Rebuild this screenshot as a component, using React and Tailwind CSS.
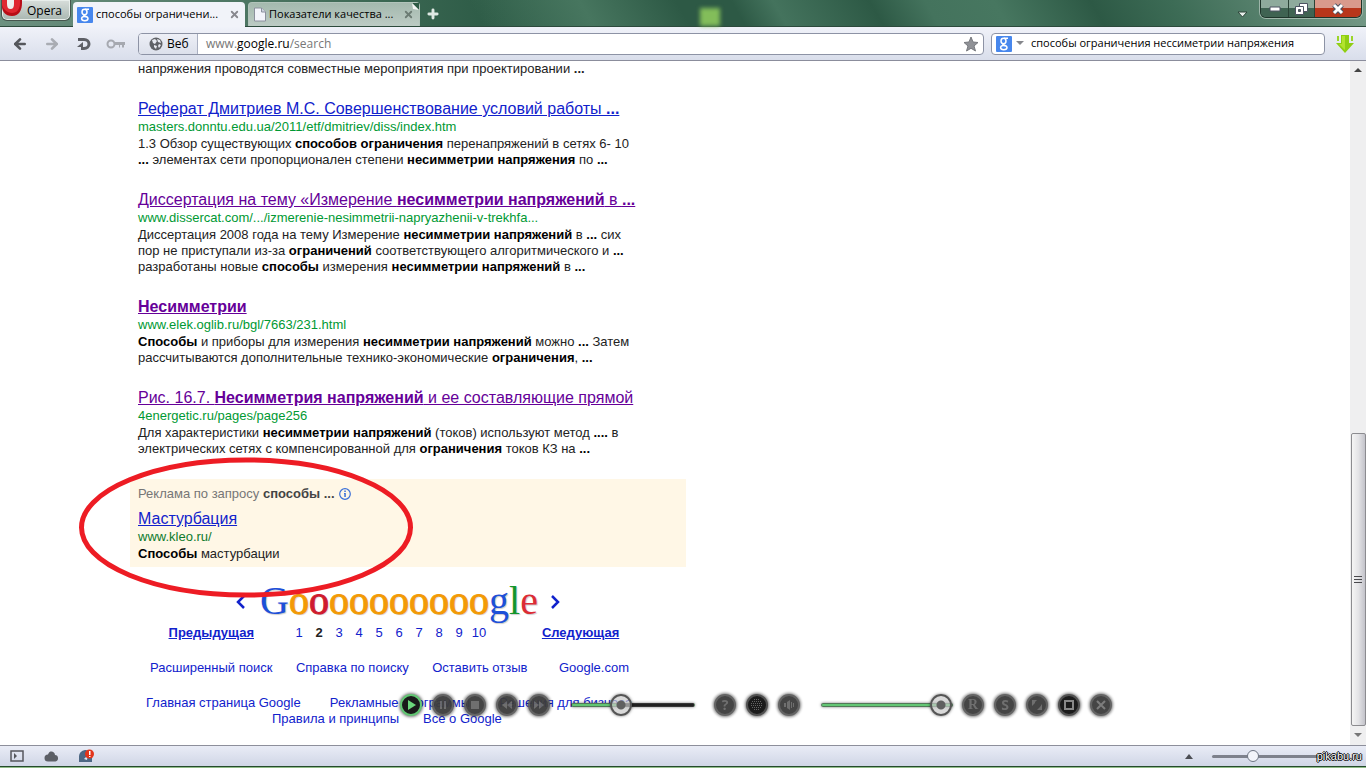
import { useState } from "react";
import { ArrowLeft, ArrowRight, Plus, X } from "lucide-react";

const results = [
  {
    title: <>Реферат Дмитриев М.С. Совершенствование условий работы <b>...</b></>,
    url: "masters.donntu.edu.ua/2011/etf/dmitriev/diss/index.htm",
    visited: false,
    lines: [
      <>1.3 Обзор существующих <b>способов ограничения</b> перенапряжений в сетях 6- 10</>,
      <><b>...</b> элементах сети пропорционален степени <b>несимметрии напряжения</b> по <b>...</b></>,
    ],
  },
  {
    title: <>Диссертация на тему «Измерение <b>несимметрии напряжений</b> в <b>...</b></>,
    url: "www.dissercat.com/.../izmerenie-nesimmetrii-napryazhenii-v-trekhfa...",
    visited: true,
    lines: [
      <>Диссертация 2008 года на тему Измерение <b>несимметрии напряжений</b> в <b>...</b> сих</>,
      <>пор не приступали из-за <b>ограничений</b> соответствующего алгоритмического и <b>...</b></>,
      <>разработаны новые <b>способы</b> измерения <b>несимметрии напряжений</b> в <b>...</b></>,
    ],
  },
  {
    title: <b>Несимметрии</b>,
    url: "www.elek.oglib.ru/bgl/7663/231.html",
    visited: true,
    lines: [
      <><b>Способы</b> и приборы для измерения <b>несимметрии напряжений</b> можно <b>...</b> Затем</>,
      <>рассчитываются дополнительные технико-экономические <b>ограничения</b>, <b>...</b></>,
    ],
  },
  {
    title: <>Рис. 16.7. <b>Несимметрия напряжений</b> и ее составляющие прямой</>,
    url: "4energetic.ru/pages/page256",
    visited: true,
    lines: [
      <>Для характеристики <b>несимметрии напряжений</b> (токов) используют метод <b>....</b> в</>,
      <>электрических сетях с компенсированной для <b>ограничения</b> токов КЗ на <b>...</b></>,
    ],
  },
];

const pages = [1, 2, 3, 4, 5, 6, 7, 8, 9, 10];

export default function App() {
  return (
    <div className="relative flex h-screen flex-col overflow-hidden bg-white font-['Open_Sans','Noto_Sans',sans-serif] text-xs text-black">
      <TabBar />
      <Toolbar />
      <div className="flex min-h-0 flex-1">
        <main className="min-w-0 flex-1 overflow-hidden pl-[138px] font-['Liberation_Sans',Arial,sans-serif] text-[13px] leading-4 whitespace-nowrap text-[#222]">
          <p className="mb-[23px]">
            напряжения проводятся совместные мероприятия при проектировании <b>...</b>
          </p>
          {results.map((r) => (
            <Result key={r.url} {...r} />
          ))}
          <Ad />
          <Pagination />
          <FooterLinks />
        </main>
        <ScrollBar />
      </div>
      <StatusBar />

      {/* Red marker around the ad */}
      <svg className="pointer-events-none absolute top-[455px] left-[76px]" width="340" height="146" viewBox="0 0 340 146">
        <ellipse cx="170" cy="72.5" rx="164.500" ry="67.500" fill="none" stroke="#ed1c24" strokeWidth="5" />
      </svg>
      <Player />
    </div>
  );
}

function GoogleIcon() {
  return (
    <svg width="16" height="16" viewBox="0 0 16 16" className="shrink-0">
      <rect width="16" height="16" rx="1" fill="#4787ed" />
      <g fill="none" stroke="#fff" strokeWidth="1.500">
        <ellipse cx="7.500" cy="5" rx="2.500" ry="2.700" />
        <path d="M8 2.200h4M7 7.700c-1 1 2 1.500 3 2.300" />
        <ellipse cx="7.800" cy="11.600" rx="3.200" ry="2.200" />
      </g>
    </svg>
  );
}

function TabBar() {
  return (
    <header className="relative flex h-[27px] shrink-0 items-start border-b border-[#2c4a3c] bg-linear-to-r from-[#6c9180] via-[#2f5d48] via-35% to-[#477a62]">
      <div className="pointer-events-none absolute inset-0 bg-[linear-gradient(60deg,transparent_0_35%,#47765f_43%,#2d5945_50%,#2d5945_54%,#44735d_57%,#2d5945_64%,#44735d_68%,#477760_73%,#2d5945_80%,#3d6c56_86%,#769a88_100%)]" />
      <div className="pointer-events-none absolute top-2 left-[700px] h-[18px] w-5 bg-[#83bd5a] blur-[2px]" />
      <button className="relative ml-px flex h-[21px] w-[70px] items-start overflow-hidden rounded-b-md border border-t-0 border-[#46564e] bg-linear-to-b from-[#d8dedb] to-[#a9b7b1] shadow-[inset_0_0_0_1px_#e8eeeb]">
        <svg width="22" height="16" viewBox="0 0 22 16" className="shrink-0">
          <path d="M0 0h20v3c0 7-3 13-10 13S0 11 0 7z" fill="#b80d16" />
          <path d="M0 0h18v3c0 6-3 10-8 10S1 9 0 5z" fill="#df2730" />
          <path d="M5 0h7v4c0 3-1 5-3.500 5S5 7 5 4z" fill="#edf0ee" />
        </svg>
        <span className="pl-[3px] leading-[22px]">Opera</span>
      </button>
      <div className="relative mt-[2px] ml-[2px] flex h-[25px] w-[172px] items-center rounded-t-sm bg-[#f1f3f9] pr-[5px] pl-1">
        <GoogleIcon />
        <span className="flex-1 pl-[3px] text-[11px] whitespace-nowrap">способы ограничени...</span>
        <button aria-label="Закрыть вкладку">
          <X className="size-[11px] text-[#88898f]" strokeWidth={4} />
        </button>
      </div>
      <div className="relative mt-[2px] ml-[3px] flex h-[24px] w-[172px] items-center rounded-t-sm border border-b-0 border-[#b2c4bb] bg-linear-to-b from-[#a4b9ae] to-[#bccbc4] pr-[5px] pl-1">
        <svg width="14" height="15" viewBox="0 0 14 15" className="shrink-0">
          <path d="M1.500 1h7l4 4v9h-11z" fill="#f3f4fb" stroke="#8b909d" />
          <path d="M8.500 1v4h4" fill="#cfd3e0" stroke="#8b909d" />
        </svg>
        <span className="flex-1 pl-[2px] text-[11px] whitespace-nowrap">Показатели качества ...</span>
        <button aria-label="Закрыть вкладку">
          <X className="size-[11px] text-[#6c7c74]" strokeWidth={4} />
        </button>
        <svg width="7" height="7" viewBox="0 0 7 7" className="absolute top-0 right-0">
          <path d="M0 0h7v7z" fill="#2d5a45" />
          <path d="M0 0l7 7-6-1z" fill="#f3f5f4" />
        </svg>
      </div>
      <button aria-label="Новая вкладка" className="relative mt-[7px] ml-[6px]">
        <Plus className="size-[14px] text-[#dfe9e4]" strokeWidth={5} />
      </button>
      <svg width="11" height="7" viewBox="0 0 11 7" className="relative mt-[11px] mr-3 ml-auto shrink-0">
        <path d="M1 1h9L5.500 6z" fill="#e8efeb" stroke="#2d4439" />
      </svg>
      <div className="relative mr-1 flex h-[18px] overflow-hidden rounded-b-md border border-t-0 border-[#1f352b] shadow-[0_0_0_1px_#9db5a9]">
        <button aria-label="Свернуть" className="flex w-7 items-center justify-center border-r border-[#2a4236] bg-linear-to-b from-[#8eaa9c] from-50% to-[#3f6352] to-50%">
          <svg width="12" height="6" viewBox="0 0 12 6"><path d="M1 1h10v4H1z" fill="#fff" stroke="#4c5362" /></svg>
        </button>
        <button aria-label="Развернуть" className="flex w-[26px] items-center justify-center border-r border-[#2a4236] bg-linear-to-b from-[#8eaa9c] from-50% to-[#3f6352] to-50%">
          <svg width="13" height="12" viewBox="0 0 13 12" fill="#fff" stroke="#4c5362">
            <path d="M4.500.5h8v8h-8z" />
            <path d="M.5 3.500h8v8h-8z" />
            <path d="M3.500 6.500h2v2h-2z" fill="#56705f" />
          </svg>
        </button>
        <button aria-label="Закрыть" className="flex w-[46px] items-center justify-center bg-linear-to-b from-[#d99a8c] from-50% to-[#b8361b] to-50%">
          <svg width="14" height="12" viewBox="0 0 14 12">
            <path d="M3 2l8 8M11 2l-8 8" stroke="#4c5362" strokeWidth="5" />
            <path d="M3 2l8 8M11 2l-8 8" stroke="#fff" strokeWidth="3" />
          </svg>
        </button>
      </div>
    </header>
  );
}

function Toolbar() {
  return (
    <div className="flex h-[34px] shrink-0 items-center border-b border-[#8b8d9c] bg-linear-to-b from-[#f0f2f9] to-[#d9deeb] pr-3 pl-3">
      <div className="flex w-[126px] items-center">
        <button aria-label="Назад" className="w-8"><ArrowLeft className="size-4 text-[#55575c]" strokeWidth={4} /></button>
        <button aria-label="Вперёд" className="w-8"><ArrowRight className="size-4 text-[#a9acb3]" strokeWidth={4} /></button>
        <button aria-label="Обновить" className="w-[30px]">
          <svg width="15" height="14" viewBox="0 0 15 14" fill="none" stroke="#5e6066" strokeWidth="3">
            <path d="M2 2.500h6c3 0 5 2 5 4.500s-2 4.500-5 4.500H5" />
            <path d="M7 5v5H1z" fill="#5e6066" stroke="none" />
          </svg>
        </button>
        <button aria-label="Пароли">
          <svg width="20" height="10" viewBox="0 0 20 10" fill="none" stroke="#a6a9b0" strokeWidth="2">
            <circle cx="5" cy="5" r="3.500" />
            <path d="M9 4.500h10M13 7h1M16 7h2" strokeWidth="3" />
          </svg>
        </button>
      </div>
      <div className="flex h-[22px] min-w-0 flex-1 items-center overflow-hidden rounded-sm border border-[#8d93a5] bg-white pr-1">
        <button className="flex h-full w-[59px] items-center gap-1 border-r border-[#aab0c1] bg-linear-to-b from-[#edeff6] to-[#dce0eb] pl-[10px]">
          <svg width="14" height="14" viewBox="0 0 14 14">
            <circle cx="7" cy="7" r="6.500" fill="#606267" />
            <path d="M3 3l3-1 2 2-2 3-2-1zM8 2l3 1 1 3-3-1zM5 8l3 1-1 3-2-2zM10 7l2 1-2 3-1-2z" fill="#e8eaf1" />
          </svg>
          Веб
        </button>
        <div className="flex-1 pl-2 text-[#777]">
          www.<span className="text-black">google.ru</span>/search
        </div>
        <button aria-label="В закладки">
          <svg width="16" height="16" viewBox="0 0 16 16">
            <path d="M8 1l2 5 5 .5-4 3.500 1.500 5L8 12.300 3.500 15 5 10 1 6.500 6 6z" fill="#8f9196" stroke="#77797e" />
          </svg>
        </button>
      </div>
      <div className="ml-[7px] flex h-[22px] w-[334px] items-center rounded-sm border border-[#8d93a5] bg-white pl-1">
        <GoogleIcon />
        <svg width="8" height="5" viewBox="0 0 8 5" className="ml-1 shrink-0"><path d="M0 0h8L4 4z" fill="#85878c" /></svg>
        <input
          aria-label="Поиск"
          className="min-w-0 flex-1 bg-transparent pl-[7px] text-[11px] outline-none"
          defaultValue="способы ограничения нессиметрии напряжения"
        />
      </div>
      <button aria-label="Загрузки" className="ml-[11px]">
        <svg width="18" height="18" viewBox="0 0 18 18">
          <path d="M5 0h8v8h5l-9 10L0 8h5z" fill="#8fce12" />
          <path d="M1 1h2v5H1zM15 1h2v5h-2z" fill="#9bd52a" />
          <path d="M6 1h3v14L3 9h3z" fill="#b2e32d" />
        </svg>
      </button>
    </div>
  );
}

function Result({ title, url, visited, lines }) {
  return (
    <article className="mb-[23px]">
      <h3 className="text-base leading-[18px]">
        <a href="#" className={`underline ${visited ? "text-[#609]" : "text-[#1122cc]"}`}>{title}</a>
      </h3>
      <cite className="block leading-[18px] text-[#093] not-italic">{url}</cite>
      {lines.map((line, i) => (
        <div key={i} className="[&_b]:text-black">{line}</div>
      ))}
    </article>
  );
}

function Ad() {
  return (
    <section className="-mt-px -ml-2 w-[556px] bg-[#fff7e6] px-2 pt-[7px] pb-[5px]">
      <div className="mb-2 flex items-center gap-1 text-[#767676]">
        <span>Реклама по запросу <b className="text-[#444]">способы ...</b></span>
        <svg width="12" height="12" viewBox="0 0 12 12">
          <circle cx="6" cy="6" r="5.300" fill="none" stroke="#3a6fd8" strokeWidth="1.200" />
          <path d="M5.300 2.500h1.500v1.500H5.300zM5 5h1.800v4H5.300V6H5z" fill="#3a6fd8" />
        </svg>
      </div>
      <h3 className="text-base leading-[18px]">
        <a href="#" className="text-[#1122cc] underline">Мастурбация</a>
      </h3>
      <cite className="block leading-[18px] text-[#0e7a2c] not-italic">www.kleo.ru/</cite>
      <div><b className="text-black">Способы</b> мастурбации</div>
    </section>
  );
}

function Letter({ className, children }) {
  return (
    <span
      className={`h-10 font-['Liberation_Serif',serif] text-[40px] leading-8 [text-shadow:1px_1px_1px_#0003] ${className}`}
    >
      {children}
    </span>
  );
}

function Pagination() {
  return (
    <nav className="mt-[18px] flex text-[#1122cc]">
      <a href="#" className="flex w-[116px] flex-col items-end font-bold underline">
        <span className="flex h-10 items-center pr-2 pb-[6px]">
          <svg width="10" height="14" viewBox="0 0 10 14" fill="none" stroke="#1122cc" strokeWidth="2.500"><path d="M8 1L2 7l6 6" /></svg>
        </span>
        Предыдущая
      </a>
      <Letter className="ml-[6px] w-[29px] text-[#1d50d8]">G</Letter>
      {pages.map((n) => (
        <a key={n} href="#" className={`flex w-5 flex-col items-center ${n === 2 ? "font-bold text-[#222]" : ""}`}>
          <Letter
            className={`[-webkit-text-stroke:1px_currentColor] ${n === 2 ? "font-normal text-[#cf1b2e]" : "text-[#f39a05]"}`}
          >
            o
          </Letter>
          {n}
        </a>
      ))}
      <Letter className="text-[#1d50d8]">g</Letter>
      <Letter className="text-[#12962b]">l</Letter>
      <Letter className="text-[#dc2c35]">e</Letter>
      <a href="#" className="ml-1 flex flex-col font-bold underline">
        <span className="flex h-10 items-center pb-[6px] pl-2">
          <svg width="10" height="14" viewBox="0 0 10 14" fill="none" stroke="#1122cc" strokeWidth="2.500"><path d="M2 1l6 6-6 6" /></svg>
        </span>
        Следующая
      </a>
    </nav>
  );
}

function FooterLinks() {
  return (
    <footer className="w-[494px] text-[#1122cc]">
      <div className="mt-[19px] flex justify-between pr-[3px] pl-3">
        <a href="#">Расширенный поиск</a>
        <a href="#">Справка по поиску</a>
        <a href="#">Оставить отзыв</a>
        <a href="#" className="pl-2">Google.com</a>
      </div>
      <div className="mt-[19px] flex justify-between pl-2">
        <a href="#">Главная страница Google</a>
        <a href="#">Рекламные программы</a>
        <a href="#">Решения для бизнеса</a>
      </div>
      <div className="flex gap-6 pl-[134px]">
        <a href="#">Правила и принципы</a>
        <a href="#">Все о Google</a>
      </div>
    </footer>
  );
}

function ScrollBar() {
  return (
    <div className="flex w-4 shrink-0 flex-col items-center bg-[#efeff0]">
      <svg width="8" height="5" viewBox="0 0 8 5" className="mt-[7px]"><path d="M4 0l4 4H0z" fill="#444" /></svg>
      <div className="flex-[361]" />
      <div className="flex w-[15px] flex-[292] items-center justify-center rounded-xs border border-[#8c8c90] bg-linear-to-r from-[#f5f5f5] via-[#e3e3e6] to-[#c3c3ca]">
        <svg width="8" height="9" viewBox="0 0 8 9"><path d="M0 1.500h8M0 4.500h8M0 7.500h8" stroke="#4a4a4e" /></svg>
      </div>
      <svg width="8" height="5" viewBox="0 0 8 5" className="my-[7px]"><path d="M0 0h8L4 4z" fill="#777" /></svg>
    </div>
  );
}

function StatusBar() {
  return (
    <div className="flex h-[23px] shrink-0 flex-col">
      <div className="flex h-[21px] items-center border-t border-[#8d8f9b] bg-linear-to-b from-[#e9ecf6] to-[#d0d6e6] pl-[10px]">
        <button aria-label="Панели">
          <svg width="14" height="12" viewBox="0 0 14 12"><path d="M1 1h12v10H1z" fill="none" stroke="#55575d" strokeWidth="1.500" /><path d="M4 3v6l3-3z" fill="#55575d" /></svg>
        </button>
        <button aria-label="Opera Link" className="ml-5">
          <svg width="15" height="11" viewBox="0 0 15 11"><path d="M4 10.500a3.500 3.500 0 010-7C5 1 6 .5 7.500.5S11 2 11 4a3.300 3.300 0 01.5 6.500z" fill="#5c5f66" /></svg>
        </button>
        <button aria-label="Opera Turbo" className="ml-5">
          <svg width="16" height="14" viewBox="0 0 16 14">
            <path d="M0 13V8a6 6 0 0113-1v6z" fill="#4d6784" />
            <path d="M5 10l4-4-1 5z" fill="#dfe5ef" />
            <circle cx="10.500" cy="5" r="4.500" fill="#e3341a" />
            <path d="M10 2h1.500v4H10zM10 7h1.500v1H10z" fill="#fff" />
          </svg>
        </button>
        <svg width="8" height="5" viewBox="0 0 8 5" className="mr-[19px] ml-auto"><path d="M4 0l4 5H0z" fill="#4c4e54" /></svg>
        <input
          type="range"
          aria-label="Масштаб"
          defaultValue="35"
          className="h-[3px] w-[113px] appearance-none rounded-full bg-[#7d818c] [&::-webkit-slider-thumb]:size-3 [&::-webkit-slider-thumb]:appearance-none [&::-webkit-slider-thumb]:rounded-full [&::-webkit-slider-thumb]:border [&::-webkit-slider-thumb]:border-[#6d7482] [&::-webkit-slider-thumb]:bg-[#f2f4fa]"
        />
        <span className="z-10 -ml-2 pr-1 font-['Liberation_Sans',sans-serif] text-[11px] leading-4 text-white [text-shadow:1px_0_#000,-1px_0_#000,0_1px_#000,0_-1px_#000]">
          pikabu.ru
        </span>
      </div>
      <div className="h-[2px] border-t border-[#254a2c] bg-[#91bd89]" />
    </div>
  );
}

function RoundButton({ label, tone = "dim", children }) {
  const tones = {
    dim: "border-[#5c5c5c] bg-[#3c3c3c] text-[#686868] opacity-95",
    dark: "border-[#505050] bg-[#1b1b1b] text-[#646464]",
    play: "border-[#62c673] bg-[#1a1a1a] text-[#6bd77b]",
  };
  return (
    <button
      aria-label={label}
      className={`mx-[5px] flex size-[22px] shrink-0 items-center justify-center rounded-full border-2 shadow-[0_0_3px_1px_#0008] ${tones[tone]}`}
    >
      {children}
    </button>
  );
}

function PlayerSlider({ label, value, onChange, className }) {
  return (
    <input
      type="range"
      aria-label={label}
      value={value}
      onChange={(e) => onChange(Number(e.target.value))}
      className={`h-[4px] appearance-none rounded-full border border-[#4449] shadow-[0_0_3px_#0008] [&::-webkit-slider-thumb]:size-[22px] [&::-webkit-slider-thumb]:appearance-none [&::-webkit-slider-thumb]:rounded-full [&::-webkit-slider-thumb]:border-2 [&::-webkit-slider-thumb]:border-[#555] [&::-webkit-slider-thumb]:bg-[radial-gradient(circle,#606060_0_4px,#c8c8c8b0_5px)] [&::-webkit-slider-thumb]:shadow-[0_0_3px_#0008] ${className}`}
      style={{ backgroundImage: `linear-gradient(to right, #62c673 ${value}%, #202020 ${value}%)` }}
    />
  );
}

function Player() {
  const [position, setPosition] = useState(38);
  const [volume, setVolume] = useState(100);

  return (
    <div className="absolute top-[693px] left-[395px] flex h-6 items-center">
      <RoundButton label="Play" tone="play">
        <svg width="12" height="12" viewBox="0 0 12 12" fill="currentColor"><path d="M3 1l8 5-8 5z" /></svg>
      </RoundButton>
      <RoundButton label="Pause">
        <svg width="10" height="10" viewBox="0 0 10 10" fill="currentColor"><path d="M2 1h2v8H2zM6 1h2v8H6z" /></svg>
      </RoundButton>
      <RoundButton label="Stop">
        <svg width="8" height="8" viewBox="0 0 8 8" fill="currentColor"><path d="M0 0h8v8H0z" /></svg>
      </RoundButton>
      <RoundButton label="Rewind">
        <svg width="12" height="10" viewBox="0 0 12 10" fill="currentColor"><path d="M6 1v8L1 5zM11 1v8L6 5z" /></svg>
      </RoundButton>
      <RoundButton label="Forward">
        <svg width="12" height="10" viewBox="0 0 12 10" fill="currentColor"><path d="M1 1v8l5-4zM6 1v8l5-4z" /></svg>
      </RoundButton>
      <PlayerSlider label="Position" value={position} onChange={setPosition} className="mr-[14px] ml-4 w-[124px]" />
      <RoundButton label="Help"><b className="text-sm leading-none">?</b></RoundButton>
      <RoundButton label="Grid" tone="dark">
        <svg width="12" height="12" viewBox="0 0 12 12" stroke="currentColor" strokeDasharray="1 1">
          <path d="M3 .5h6M1 2.500h10M0 4.500h12M0 6.500h12M1 8.500h10M3 10.500h6" />
        </svg>
      </RoundButton>
      <RoundButton label="Sound">
        <svg width="12" height="12" viewBox="0 0 12 12" fill="currentColor"><path d="M1 4h2v4H1zM4 3l3-2v10L4 9zM8 3h1v6H8zM10 4h1v4h-1z" /></svg>
      </RoundButton>
      <PlayerSlider
        label="Volume"
        value={volume}
        onChange={setVolume}
        className="mr-1 ml-4 w-[132px]"
      />
      <RoundButton label="Repeat"><b className="font-['Liberation_Serif',serif] text-sm leading-none">R</b></RoundButton>
      <RoundButton label="Shuffle"><b className="text-sm leading-none">S</b></RoundButton>
      <RoundButton label="Resize">
        <svg width="10" height="10" viewBox="0 0 10 10" fill="currentColor"><path d="M0 0h5L3 2v1L0 6zM10 10H5l2-2 1-1 2-3z" /></svg>
      </RoundButton>
      <RoundButton label="Window" tone="dark">
        <svg width="10" height="10" viewBox="0 0 10 10" fill="none" stroke="#888" strokeWidth="2"><path d="M1 1h8v8H1z" /></svg>
      </RoundButton>
      <RoundButton label="Close">
        <svg width="10" height="10" viewBox="0 0 10 10" fill="none" stroke="#777" strokeWidth="2"><path d="M1 1l8 8M9 1L1 9" /></svg>
      </RoundButton>
    </div>
  );
}
